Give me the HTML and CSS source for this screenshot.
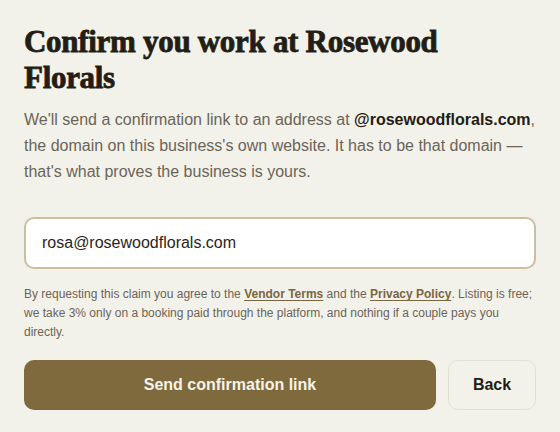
FILE: index.html
```html
<!DOCTYPE html>
<html lang="en">
<head>
<meta charset="utf-8">
<title>Confirm you work at Rosewood Florals</title>
<link rel="stylesheet" href="styles.css">
</head>
<body>
<main class="claim">
  <h1 class="claim-title">Confirm you work at Rosewood Florals</h1>
  <p class="claim-lead">We'll send a confirmation link to an address at <strong>@rosewoodflorals.com</strong>, the domain on this business's own website. It has to be that domain — that's what proves the business is yours.</p>
  <input class="claim-input" type="email" value="rosa@rosewoodflorals.com" aria-label="Work email">
  <p class="claim-terms">By requesting this claim you agree to the <a href="#" class="claim-link">Vendor Terms</a> and the <a href="#" class="claim-link">Privacy Policy</a>. Listing is free; we take 3% only on a booking paid through the platform, and nothing if a couple pays you directly.</p>
  <div class="claim-actions">
    <button class="btn btn-primary" type="button">Send confirmation link</button>
    <button class="btn btn-secondary" type="button">Back</button>
  </div>
</main>
</body>
</html>
```

FILE: styles.css
```css
* { box-sizing: border-box; }
html, body { margin: 0; padding: 0; }
body {
  background: #f3f2ea;
  font-family: "Liberation Sans", Arial, sans-serif;
  color: #2a2520;
}
.claim {
  padding: 24px 24px;
  display: flex;
  flex-direction: column;
}
.claim-title {
  margin: 0;
  max-width: 460px;
  font-family: "Liberation Serif", "Times New Roman", serif;
  font-weight: 700;
  font-size: 31px;
  line-height: 36px;
  letter-spacing: -0.3px;
  color: #231d16;
  -webkit-text-stroke: 0.8px #231d16;
}
.claim-lead {
  margin: 11px 0 0;
  font-size: 16px;
  line-height: 26px;
  color: #6b6458;
}
.claim-lead strong {
  color: #231d16;
  font-weight: 700;
}
.claim-input {
  margin-top: 32px;
  height: 52px;
  width: 100%;
  border: 2px solid #cbbf9e;
  border-radius: 10px;
  background: #ffffff;
  padding: 0 16px;
  font-family: "Liberation Sans", Arial, sans-serif;
  font-size: 16px;
  color: #2a2520;
  outline: none;
}
.claim-terms {
  margin: 16px 0 0;
  font-size: 12px;
  line-height: 19px;
  color: #6b6458;
}
.claim-link {
  color: #7a6540;
  font-weight: 700;
  text-decoration: underline;
  text-decoration-color: #7a6540;
  text-underline-offset: 2px;
}
.claim-actions {
  margin-top: 18px;
  display: flex;
  gap: 12px;
}
.btn {
  height: 50px;
  border-radius: 10px;
  font-family: "Liberation Sans", Arial, sans-serif;
  font-size: 16px;
  font-weight: 700;
  cursor: pointer;
}
.btn-primary {
  flex: 1;
  background: #7f6a3e;
  color: #f7f3e8;
  border: none;
}
.btn-secondary {
  width: 88px;
  background: #f3f2ea;
  color: #231d16;
  border: 1px solid #e2dfd2;
}
```
